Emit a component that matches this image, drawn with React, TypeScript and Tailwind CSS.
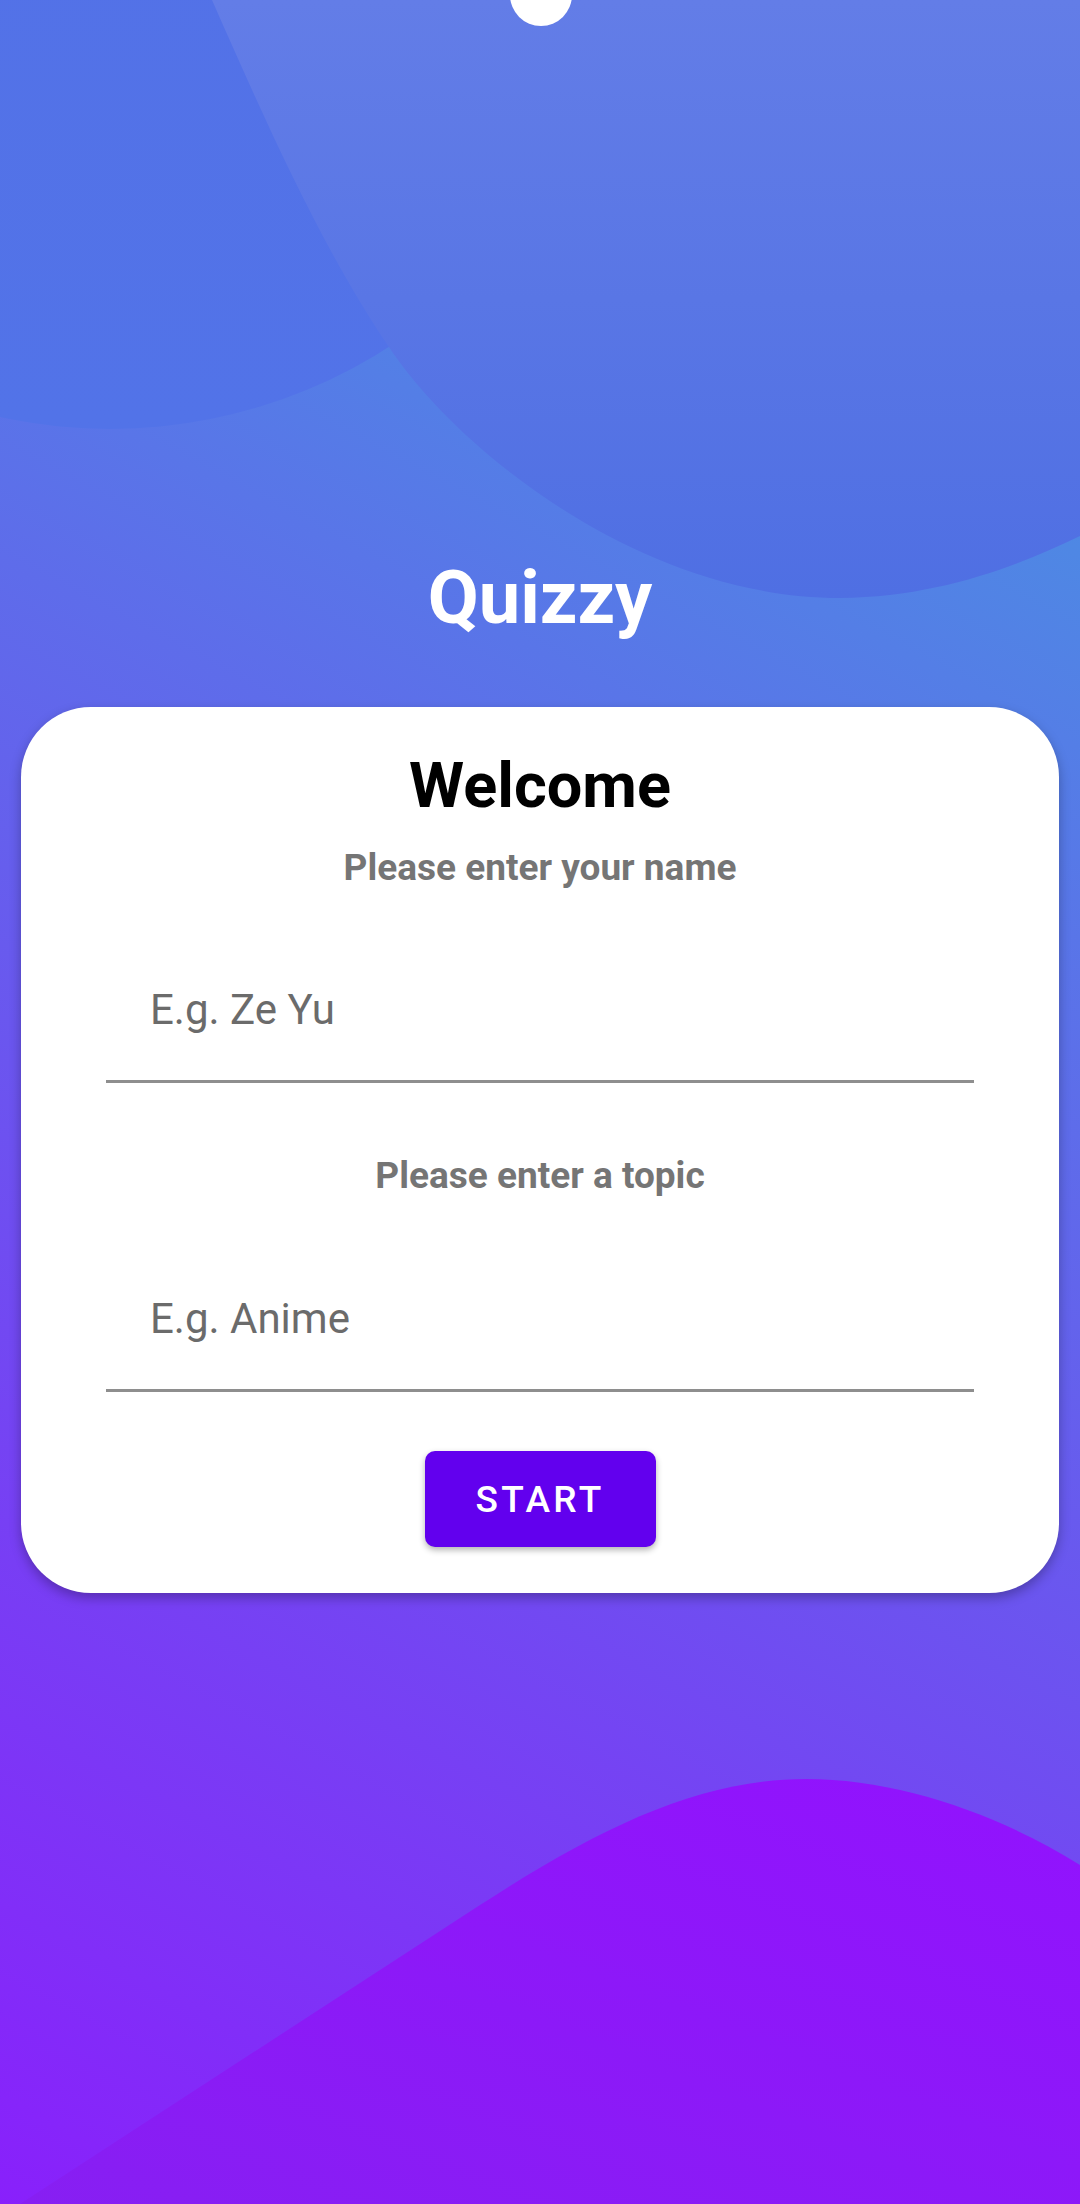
function Backdrop() {
  return (
    <svg
      className="absolute inset-0 h-full w-full"
      viewBox="0 0 1080 2204"
      preserveAspectRatio="none"
    >
      <defs>
        <linearGradient id="smallBlob" x1="0" y1="0" x2="0" y2="1">
          <stop offset="0" stopColor="#5470e6" />
          <stop offset="1" stopColor="#5273e8" />
        </linearGradient>
        <linearGradient id="bigBlob" x1="0" y1="0" x2="0" y2="1">
          <stop offset="0" stopColor="#637de7" />
          <stop offset="1" stopColor="#4f6fe3" />
        </linearGradient>
        <linearGradient id="wave" x1="1" y1="0" x2="0" y2="1">
          <stop offset="0" stopColor="#9212fe" />
          <stop offset="1" stopColor="#871ff2" />
        </linearGradient>
      </defs>
      <circle cx="110" cy="-86" r="515" fill="url(#smallBlob)" />
      <path
        d="M212 0 C265 120 322 250 393 353 C460 450 640 598 840 598 C940 597 1020 565 1080 536 L1080 0 Z"
        fill="url(#bigBlob)"
      />
      <path
        d="M20 2204 L480 1905 C600 1827 700 1779 806 1779 C900 1779 1000 1815 1080 1865 L1080 2204 Z"
        fill="url(#wave)"
      />
    </svg>
  );
}

function Field({ placeholder }: { placeholder: string }) {
  return (
    <div className="mx-[85px]">
      <input
        type="text"
        placeholder={placeholder}
        className="block h-[95px] w-full border-b-[3px] border-[#8e8e8e] bg-transparent pb-[50px] pl-[44px] text-[42px] leading-none text-[#222] outline-none placeholder:text-[#6b6b6b]"
      />
    </div>
  );
}

export default function App() {
  return (
    <div className="relative h-[2204px] w-full overflow-hidden bg-[linear-gradient(208deg,#4a90e2_13%,#9013fe_110%)] font-['Roboto',sans-serif]">
      <Backdrop />

      {/* camera cutout */}
      <div className="absolute left-[510px] top-[-36px] h-[62px] w-[62px] rounded-full bg-white" />

      <div className="relative flex flex-col pt-[561px]">
        <h1 className="text-center text-[74px] font-bold leading-none text-white">
          Quizzy
        </h1>

        <div className="mx-[21px] mt-[72px] flex flex-col rounded-[70px] bg-white pb-[46px] pt-[47px] shadow-[0_5px_12px_rgba(0,0,0,0.28)]">
          <h2 className="text-center text-[63px] font-bold leading-none text-black">
            Welcome
          </h2>
          <p className="mt-[32px] text-center text-[37px] font-bold leading-none text-[#757575]">
            Please enter your name
          </p>

          <div className="mt-[102px]">
            <Field placeholder="E.g. Ze Yu" />
          </div>

          <p className="mt-[74px] text-center text-[37px] font-bold leading-none text-[#757575]">
            Please enter a topic
          </p>

          <div className="mt-[103px]">
            <Field placeholder="E.g. Anime" />
          </div>

          <div className="mt-[59px] flex justify-center">
            <button className="flex h-[96px] w-[231px] items-center justify-center rounded-[10px] bg-[#6200ee] text-[37px] font-medium leading-none tracking-[0.09em] text-white shadow-[0_3px_6px_rgba(0,0,0,0.3)]">
              START
            </button>
          </div>
        </div>
      </div>
    </div>
  );
}
